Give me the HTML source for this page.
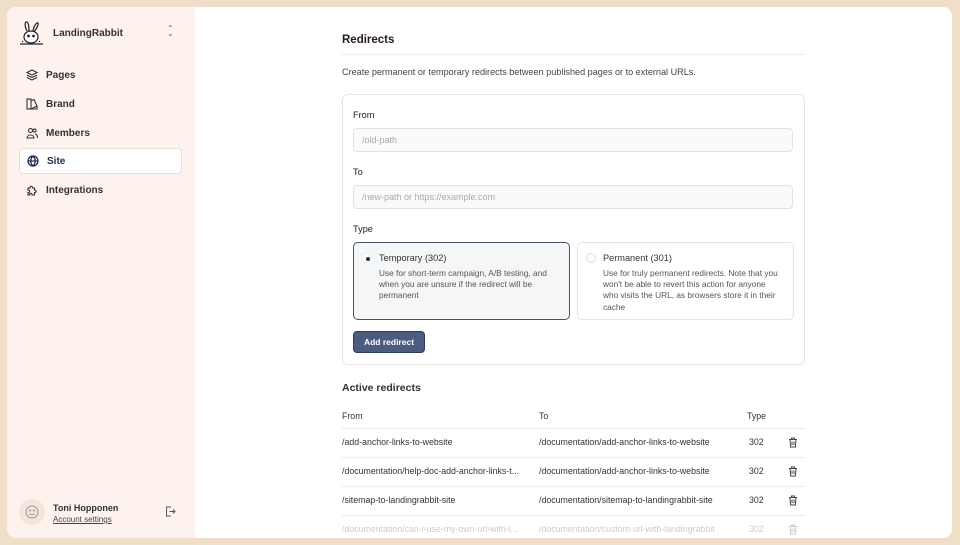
<!DOCTYPE html>
<html><head><meta charset="utf-8"><style>
*{box-sizing:border-box;margin:0;padding:0}
body{width:960px;height:545px;background:#f0dfc8;font-family:"Liberation Sans",sans-serif;color:#222;position:relative;overflow:hidden}
.win{position:absolute;left:7px;top:7px;width:945px;height:531px;background:#fff;border-radius:9px;overflow:hidden}
.side{position:absolute;left:0;top:0;width:188px;height:100%;background:#fdf2ee}
.a{position:absolute}
.nav{position:absolute;left:12px;width:163px;height:26px;font-size:10px;font-weight:bold;color:#333;display:flex;align-items:center;padding-left:7px}
.nav svg{margin-right:8px}
.nav.on{background:#fff;border:1px solid #e7dfdc;border-radius:4px}
.lbl{position:absolute;left:346px;font-size:9.2px;color:#222}
.inp{position:absolute;left:346px;width:440px;height:24px;border:1px solid #e2e2e2;border-radius:4px;background:#fafafa;font-size:9px;color:#aaa;padding:6px 8px}
.opt{position:absolute;top:235px;width:217px;height:78px;border-radius:5px;border:1px solid #e4e4e4;background:#fff}
.opt .t{position:absolute;left:25px;top:10px;font-size:9.2px;color:#333}
.opt .d{position:absolute;left:25px;top:25px;font-size:8.3px;line-height:11.2px;color:#555;width:184px}
.opt .r{position:absolute;left:8px;top:10px;width:10px;height:10px;border-radius:50%;border:1px solid #ddd;background:#fff}
.row{position:absolute;left:335px;width:463px;height:29px;border-top:1px solid #ebebeb;font-size:8.8px;color:#333}
.row span{position:absolute;top:8px}
.row svg{position:absolute;left:446px;top:8px}
</style></head><body>
<div class="win">
<div class="side">
 <svg class="a" style="left:11px;top:13px" width="28" height="28" viewBox="0 0 28 28" fill="none" stroke="#222" stroke-width="1.2"><path d="M9 11 C6 5 7 1 9 2 C11 3 11 8 11 11"/><path d="M15 11 C16 5 19 2 20 3 C21 5 18 9 16 12"/><ellipse cx="13" cy="17" rx="7" ry="6" fill="#fff"/><circle cx="10.5" cy="16" r=".8" fill="#222"/><circle cx="15.5" cy="16" r=".8" fill="#222"/><path d="M2 24 H25"/><path d="M4 21 l1 1 M22 21 l-1 1"/></svg>
 <div class="a" style="left:46px;top:21px;font-size:10px;font-weight:bold;color:#333">LandingRabbit</div>
 <div class="a" style="left:160px;top:19px;font-size:8px;color:#666;line-height:5px">⌃<br>⌄</div>
 <div class="nav" style="top:55px"><svg width="12" height="12" viewBox="0 0 12 12" fill="none" stroke="#333" stroke-width="1.1"><path d="M6 1 L11 3.5 L6 6 L1 3.5Z M1 6 L6 8.5 L11 6 M1 8.5 L6 11 L11 8.5"/></svg>Pages</div>
 <div class="nav" style="top:84px"><svg width="12" height="12" viewBox="0 0 12 12" fill="none" stroke="#333" stroke-width="1.1"><rect x="1" y="1" width="4" height="10"/><path d="M5 3 L8 1.5 L11 8 L5 11 M5 11 H11 V8"/></svg>Brand</div>
 <div class="nav" style="top:113px"><svg width="12" height="12" viewBox="0 0 12 12" fill="none" stroke="#333" stroke-width="1.1"><circle cx="4.5" cy="3.5" r="2"/><path d="M1 11 C1 7 8 7 8 11 Z"/><circle cx="8.5" cy="3.5" r="1.6"/><path d="M9 7 C11 7 11.5 9 11.5 11"/></svg>Members</div>
 <div class="nav on" style="top:141px"><svg width="12" height="12" viewBox="0 0 12 12" fill="none" stroke="#1f2d4a" stroke-width="1.3"><circle cx="6" cy="6" r="5"/><path d="M1 6 H11 M6 1 C3 4 3 8 6 11 C9 8 9 4 6 1"/></svg><span style="color:#1f2d4a">Site</span></div>
 <div class="nav" style="top:170px"><svg width="12" height="12" viewBox="0 0 12 12" fill="none" stroke="#333" stroke-width="1.1"><path d="M2 4 H4 A1.3 1.3 0 1 1 6.5 4 H8.5 V6 A1.3 1.3 0 1 1 8.5 8.5 V11 H6 A1.3 1.3 0 1 0 3.5 11 H2 V8.5 A1.3 1.3 0 1 0 2 6Z"/></svg>Integrations</div>
 <div class="a" style="left:12px;top:492px;width:26px;height:26px;border-radius:50%;background:#f6e3da"><svg style="position:absolute;left:6px;top:6px" width="14" height="14" viewBox="0 0 14 14" fill="none" stroke="#999" stroke-width="1"><circle cx="7" cy="7" r="6"/><circle cx="5" cy="5.5" r=".5"/><circle cx="9" cy="5.5" r=".5"/><path d="M4.5 8.5 C6 10 8 10 9.5 8.5"/></svg></div>
 <div class="a" style="left:46px;top:496px;font-size:9px;font-weight:bold;color:#333">Toni Hopponen</div>
 <div class="a" style="left:46px;top:508px;font-size:8px;color:#444;text-decoration:underline">Account settings</div>
 <svg class="a" style="left:158px;top:499px" width="11" height="11" viewBox="0 0 11 11" fill="none" stroke="#555" stroke-width="1"><path d="M6 1 H1.5 V10 H6 M4.5 5.5 H10 M8 3.5 L10 5.5 L8 7.5"/></svg>
</div>
<div class="a" style="left:335px;top:27px;font-size:11.5px;font-weight:bold;color:#2a1a1a">Redirects</div>
<div class="a" style="left:335px;top:47px;width:463px;height:1px;background:#ececec"></div>
<div class="a" style="left:335px;top:60px;font-size:9.1px;color:#444">Create permanent or temporary redirects between published pages or to external URLs.</div>
<div class="a" style="left:335px;top:87px;width:463px;height:271px;border:1px solid #e6e6e6;border-radius:6px"></div>
<div class="lbl" style="top:103px">From</div>
<div class="inp" style="top:121px">/old-path</div>
<div class="lbl" style="top:160px">To</div>
<div class="inp" style="top:178px">/new-path or https://example.com</div>
<div class="lbl" style="top:217px">Type</div>
<div class="opt" style="left:346px;background:#f5f6f8;border-color:#4a5268"><div class="r" style="border-color:#eee"><div style="position:absolute;left:2.5px;top:2.5px;width:4px;height:4px;border-radius:50%;background:#1f2d4a"></div></div><div class="t">Temporary (302)</div><div class="d">Use for short-term campaign, A/B testing, and when you are unsure if the redirect will be permanent</div></div>
<div class="opt" style="left:570px"><div class="r"></div><div class="t">Permanent (301)</div><div class="d" style="width:180px">Use for truly permanent redirects. Note that you won't be able to revert this action for anyone who visits the URL, as browsers store it in their cache</div></div>
<div class="a" style="left:346px;top:324px;width:72px;height:22px;background:#4b5c80;border:1px solid #2f3d5c;border-radius:4px;color:#fff;font-size:8.5px;font-weight:bold;text-align:center;line-height:20px">Add redirect</div>
<div class="a" style="left:335px;top:375px;font-size:10.5px;font-weight:bold;color:#333">Active redirects</div>
<div class="a" style="left:335px;top:404px;font-size:8.8px;color:#333">From</div>
<div class="a" style="left:532px;top:404px;font-size:8.8px;color:#333">To</div>
<div class="a" style="left:740px;top:404px;font-size:8.8px;color:#333">Type</div>
<div class="row" style="top:421px"><span style="left:0">/add-anchor-links-to-website</span><span style="left:197px">/documentation/add-anchor-links-to-website</span><span style="left:407px">302</span><svg width="10" height="11" viewBox="0 0 10 11" fill="none" stroke="#444" stroke-width="1"><path d="M1 2.5 H9 M3.5 2.5 V1 H6.5 V2.5 M2 2.5 L2.6 10 H7.4 L8 2.5 M4 4.5 V8 M6 4.5 V8"/></svg></div>
<div class="row" style="top:450px"><span style="left:0">/documentation/help-doc-add-anchor-links-t...</span><span style="left:197px">/documentation/add-anchor-links-to-website</span><span style="left:407px">302</span><svg width="10" height="11" viewBox="0 0 10 11" fill="none" stroke="#444" stroke-width="1"><path d="M1 2.5 H9 M3.5 2.5 V1 H6.5 V2.5 M2 2.5 L2.6 10 H7.4 L8 2.5 M4 4.5 V8 M6 4.5 V8"/></svg></div>
<div class="row" style="top:479px"><span style="left:0">/sitemap-to-landingrabbit-site</span><span style="left:197px">/documentation/sitemap-to-landingrabbit-site</span><span style="left:407px">302</span><svg width="10" height="11" viewBox="0 0 10 11" fill="none" stroke="#444" stroke-width="1"><path d="M1 2.5 H9 M3.5 2.5 V1 H6.5 V2.5 M2 2.5 L2.6 10 H7.4 L8 2.5 M4 4.5 V8 M6 4.5 V8"/></svg></div>
<div class="row" style="top:508px;color:#ccc"><span style="left:0">/documentation/can-i-use-my-own-url-with-l...</span><span style="left:197px">/documentation/custom-url-with-landingrabbit</span><span style="left:407px">302</span><svg width="10" height="11" viewBox="0 0 10 11" fill="none" stroke="#ccc" stroke-width="1"><path d="M1 2.5 H9 M3.5 2.5 V1 H6.5 V2.5 M2 2.5 L2.6 10 H7.4 L8 2.5 M4 4.5 V8 M6 4.5 V8"/></svg></div>
</div>
</body></html>
